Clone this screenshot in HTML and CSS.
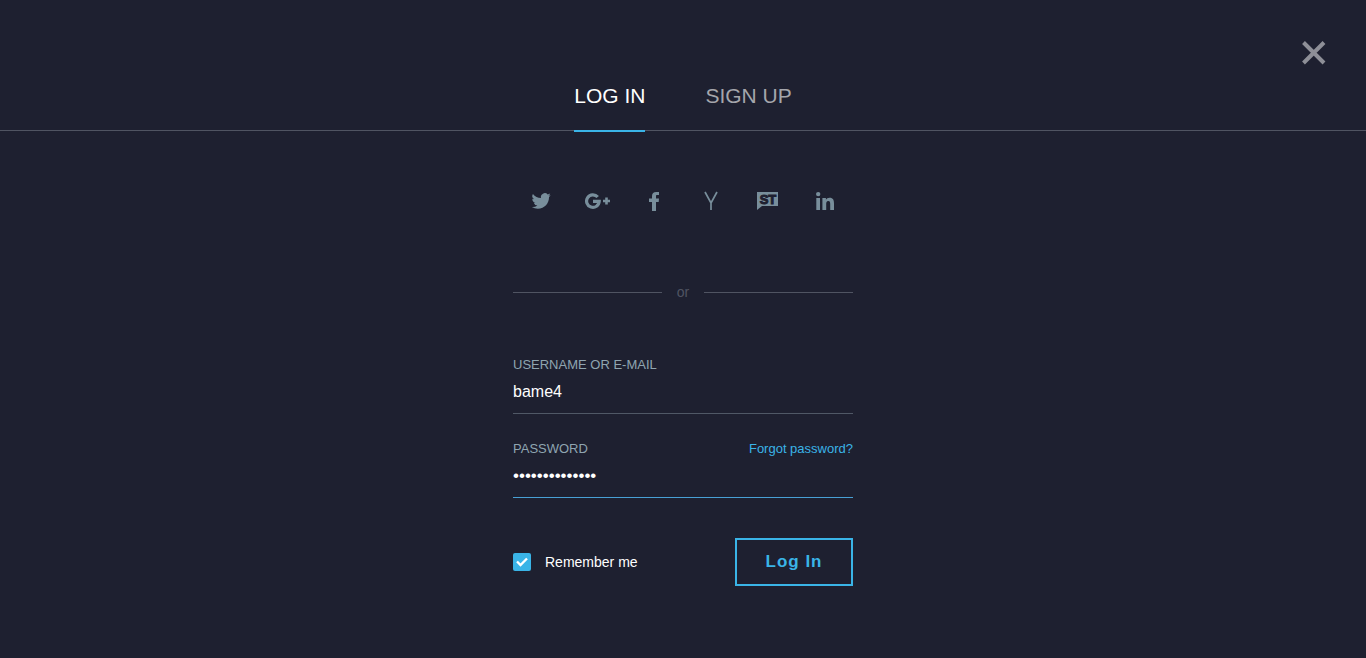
FILE: index.html
```html
<!DOCTYPE html>
<html lang="en">
<head>
<meta charset="utf-8">
<meta name="viewport" content="width=device-width, initial-scale=1">
<title>Log In</title>
<link rel="stylesheet" href="styles.css">
</head>
<body>
<button class="close" type="button" aria-label="Close">
  <svg width="24" height="24" viewBox="0 0 24 24"><path d="M1.500 1.500L22 22M22 1.500L1.500 22" fill="none" stroke="currentColor" stroke-width="4"/></svg>
</button>
<nav class="tabs">
  <a class="tab tab-active" href="#login">LOG IN</a>
  <a class="tab" href="#signup">SIGN UP</a>
</nav>
<main class="panel">
  <div class="social">
    <a href="#twitter" aria-label="Twitter"><svg width="20" height="20" viewBox="-1 0 25 24"><path d="M23.600 4.600a9.700 9.700 0 0 1-2.800.800 4.900 4.900 0 0 0 2.200-2.700 9.900 9.900 0 0 1-3.100 1.200 4.900 4.900 0 0 0-8.400 4.500A14 14 0 0 1 1.400 3.200a4.900 4.900 0 0 0 1.500 6.600 4.900 4.900 0 0 1-2.200-.600 4.900 4.900 0 0 0 3.900 4.900 4.900 4.900 0 0 1-2.200.100 4.900 4.900 0 0 0 4.600 3.400A9.900 9.900 0 0 1 0 19.600a13.900 13.900 0 0 0 7.500 2.200c9.100 0 14.300-7.700 14-14.600a10 10 0 0 0 2.100-2.600z" fill="currentColor"/></svg></a>
    <a href="#google" aria-label="Google Plus"><svg width="26" height="20" viewBox="0 0 26 20"><path d="M12.700 6A6.300 6.300 0 1 0 14.200 10.300H8" fill="none" stroke="currentColor" stroke-width="3.200"/><path d="M21.500 6.500V13.500M18 10H25" fill="none" stroke="currentColor" stroke-width="2.600"/></svg></a>
    <a href="#facebook" aria-label="Facebook"><svg width="12" height="20" viewBox="0 0 12 20"><path d="M10 .900V4H8.200C7.200 4 7 4.500 7 5.300V7.500H10L9.700 11H7V20H3V11H0V7.500H3V5C3 2.200 4.600.900 7.200.900z" fill="currentColor"/></svg></a>
    <a href="#ycombinator" aria-label="Y Combinator"><svg width="14" height="20" viewBox="0 0 14 20"><path d="M1 1L7 12L13 1M7 11.500V19" fill="none" stroke="currentColor" stroke-width="1.700"/></svg></a>
    <a href="#st" aria-label="ST"><svg width="22" height="20" viewBox="0 0 22 20"><path d="M0 1H21V15H5L0 19z" fill="currentColor"/><text class="badge" x="11" y="13" text-anchor="middle">ST</text></svg></a>
    <a href="#linkedin" aria-label="LinkedIn"><svg width="18" height="20" viewBox="0 0 18 20"><circle cx="2.200" cy="3.100" r="2.200" fill="currentColor"/><path d="M.300 7H4V19H.300zM6.400 7H9.900V8.700C10.600 7.500 11.900 6.700 13.500 6.700 17.200 6.700 18 9.100 18 12.400V19H14.200V13.100C14.200 11.600 14.100 10 12.300 10 10.500 10 10.200 11.500 10.200 13V19H6.400z" fill="currentColor"/></svg></a>
  </div>
  <div class="divider"><span>or</span></div>
  <form>
    <div class="field">
      <label for="user">USERNAME OR E-MAIL</label>
      <input id="user" type="text" value="bame4">
    </div>
    <div class="field field-focus">
      <div class="label-row">
        <label for="pass">PASSWORD</label>
        <a class="forgot" href="#forgot">Forgot password?</a>
      </div>
      <input id="pass" type="password" value="abcdefghijklmn">
    </div>
    <div class="actions">
      <label class="remember"><input type="checkbox" checked><span class="box"><svg width="12" height="10" viewBox="0 0 12 10"><path d="M1 4.500L4.500 8L11 1.500" fill="none" stroke="currentColor" stroke-width="2.400"/></svg></span>Remember me</label>
      <button class="submit" type="submit">Log In</button>
    </div>
  </form>
</main>
</body>
</html>
```
FILE: styles.css
```css
* { box-sizing: border-box; }
body {
  margin: 0;
  min-height: 100vh;
  background: #1e2030;
  color: #fff;
  font-family: "Liberation Sans", Arial, sans-serif;
}
a { text-decoration: none; }
svg { display: block; }
.close {
  position: absolute;
  top: 41px;
  right: 40px;
  padding: 0;
  border: 0;
  background: none;
  color: #8e8f97;
  cursor: pointer;
}
.tabs {
  display: flex;
  justify-content: center;
  gap: 60px;
  padding-top: 84px;
  border-bottom: 1px solid #505462;
}
.tab {
  margin-bottom: -2px;
  padding-bottom: 22px;
  border-bottom: 2px solid transparent;
  color: #a5a6ac;
  font-size: 21px;
  line-height: 24px;
}
.tab-active {
  border-color: #3ab4e7;
  color: #fff;
}
.panel {
  width: 100%;
  max-width: 340px;
  margin: 0 auto;
  padding: 60px 0 72px;
}
.social {
  display: grid;
  grid-template-columns: repeat(6, 1fr);
}
.social a {
  display: flex;
  justify-content: center;
  color: #788e9b;
}
.badge {
  fill: #1e2030;
  stroke: #1e2030;
  stroke-width: 1px;
  font-size: 13px;
  font-weight: bold;
}
.divider {
  display: flex;
  align-items: center;
  gap: 15px;
  margin-top: 73px;
  color: #505462;
  font-size: 14px;
  line-height: 16px;
}
.divider::before,
.divider::after {
  content: "";
  flex: 1;
  height: 1px;
  background: #505462;
}
form { margin-top: 57px; }
.field {
  display: flex;
  flex-direction: column;
  margin-bottom: 27px;
  border-bottom: 1px solid #505866;
}
.field label,
.forgot {
  font-size: 13px;
  line-height: 16px;
}
.field label { color: #8fa5b0; }
.label-row {
  display: flex;
  justify-content: space-between;
}
.forgot { color: #3ab4e7; }
.field input {
  width: 100%;
  height: 40px;
  padding: 0 0 2px;
  border: 0;
  outline: 0;
  background: none;
  color: #fff;
  font: 16px "Liberation Sans", Arial, sans-serif;
}
.field input[type="password"] { font-size: 17px; }
.field-focus {
  margin-bottom: 40px;
  border-color: #48a0d4;
}
.actions {
  display: flex;
  align-items: center;
  justify-content: space-between;
}
.remember {
  position: relative;
  display: flex;
  align-items: center;
  gap: 14px;
  font-size: 14px;
}
.remember input {
  position: absolute;
  width: 18px;
  height: 18px;
  margin: 0;
  opacity: 0;
}
.box {
  display: grid;
  place-items: center;
  width: 18px;
  height: 18px;
  border-radius: 2px;
  background: #3ab4e7;
  color: #fff;
}
.box svg { visibility: hidden; }
.remember input:checked + .box svg { visibility: visible; }
.submit {
  width: 118px;
  height: 48px;
  padding: 0;
  border: 2px solid #3ab4e7;
  background: none;
  color: #3ab4e7;
  font: bold 17px "Liberation Sans", Arial, sans-serif;
  letter-spacing: 1px;
  cursor: pointer;
}
```
